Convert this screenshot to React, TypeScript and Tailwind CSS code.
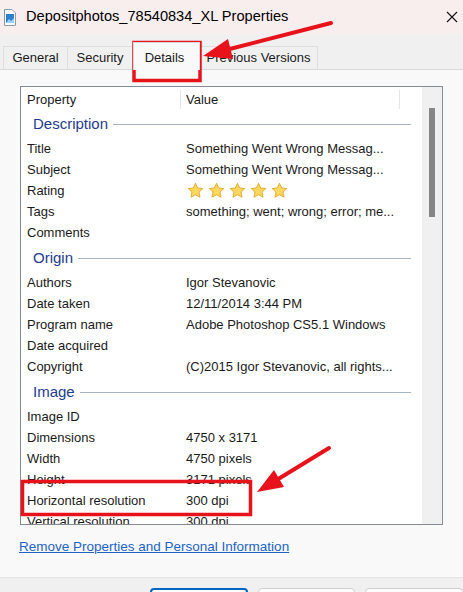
import type { ReactNode } from "react";

type Row = [string, ReactNode];

function Stars() {
  return (
    <div className="flex items-center gap-[4px] pl-[1px]">
      {[0, 1, 2, 3, 4].map((i) => (
        <svg key={i} width="17" height="17" viewBox="0 0 24 24">
          <path
            d="M12 1.8l3.1 6.6 7.2.9-5.3 5 1.4 7.2L12 18l-6.4 3.5 1.4-7.2-5.3-5 7.2-.9z"
            fill="#fbd760"
            stroke="#e3a92b"
            strokeWidth="1.3"
            strokeLinejoin="round"
          />
        </svg>
      ))}
    </div>
  );
}

const groups: { name: string; rows: Row[] }[] = [
  {
    name: "Description",
    rows: [
      ["Title", "Something Went Wrong Messag..."],
      ["Subject", "Something Went Wrong Messag..."],
      ["Rating", <Stars />],
      ["Tags", "something; went; wrong; error; me..."],
      ["Comments", ""],
    ],
  },
  {
    name: "Origin",
    rows: [
      ["Authors", "Igor Stevanovic"],
      ["Date taken", "12/11/2014 3:44 PM"],
      ["Program name", "Adobe Photoshop CS5.1 Windows"],
      ["Date acquired", ""],
      ["Copyright", "(C)2015 Igor Stevanovic, all rights..."],
    ],
  },
  {
    name: "Image",
    rows: [
      ["Image ID", ""],
      ["Dimensions", "4750 x 3171"],
      ["Width", "4750 pixels"],
      ["Height", "3171 pixels"],
      ["Horizontal resolution", "300 dpi"],
      ["Vertical resolution", "300 dpi"],
    ],
  },
];

const tabs = [
  { label: "General", w: "w-[65px]" },
  { label: "Security", w: "w-[65px]" },
  { label: "Details", w: "w-[67px]", active: true },
  { label: "Previous Versions", w: "w-[118px]" },
];

export default function App() {
  return (
    <div
      className="relative h-[592px] w-[463px] overflow-hidden bg-[#f0f0f0] text-[13px] text-[#1a1a1a]"
      style={{ fontFamily: '"Liberation Sans", Arial, sans-serif' }}
    >
      {/* Title bar */}

      <div className="flex h-[34px] items-center bg-[#f9eeee]">
        <svg className="ml-[4px]" width="12" height="17" viewBox="0 0 12 17">
          <path d="M0.5 0.5h7.5l3.5 3.5v12.5h-11z" fill="#fff" stroke="#8a9bb0" />
          <rect x="2" y="5" width="8" height="9" fill="#2f7fd0" />
          <path d="M2 14l3-4 2 2 3-3v5z" fill="#9ad0ff" />
        </svg>
        <span className="ml-[10px] text-[14.6px] text-black">
          Depositphotos_78540834_XL Properties
        </span>
        <svg className="ml-auto mr-[5px]" width="12" height="12" viewBox="0 0 12 12">
          <path d="M1 1l10 10M11 1L1 11" stroke="#111" strokeWidth="1.1" />
        </svg>
      </div>

      {/* Tabs */}

      <div className="mt-[8px] flex h-[27px] items-end pl-[3px]">
        {tabs.map((t) =>
          t.active ? (
            <div
              key={t.label}
              className={`${t.w} relative z-10 -mb-px flex h-[28px] items-start justify-center border border-b-0 border-[#d9d9d9] bg-[#f9f9f9] pr-[4px] pt-[5px]`}
            >
              {t.label}
            </div>
          ) : (
            <div
              key={t.label}
              className={`${t.w} flex h-[23px] items-center justify-center border border-b-0 border-l-0 border-[#dedede] bg-[#f0f0f0] first:border-l`}
            >
              {t.label}
            </div>
          ),
        )}
      </div>

      {/* Details panel */}

      <div className="h-[508px] border-t border-[#d9d9d9] bg-[#f9f9f9] pl-[20px] pt-[16px]">
        <div className="flex h-[439px] w-[423px] overflow-hidden border border-[#868a91] bg-white">
          <div className="flex-1 overflow-hidden">
            <div className="flex h-[22px] pt-[3px]">
              <div className="w-[159px] pl-[6px]">Property</div>
              <div className="w-px bg-[#e5e5e5]" />
              <div className="w-[218px] pl-[5px]">Value</div>
              <div className="w-px bg-[#e5e5e5]" />
            </div>

            {groups.map((g) => (
              <div key={g.name}>
                <div className="flex h-[29px] items-center pl-[12px] pr-[11px] pt-[2px] text-[15px] text-[#1e3c8f]">
                  <span>{g.name}</span>
                  <div className="ml-[5px] h-px flex-1 bg-[#a7b3c6]" />
                </div>
                {g.rows.map(([k, v]) => (
                  <div key={k} className="flex h-[21px] items-center">
                    <div className="w-[165px] shrink-0 pl-[6px]">{k}</div>
                    <div className="whitespace-nowrap">{v}</div>
                  </div>
                ))}
              </div>
            ))}
          </div>

          {/* Scrollbar */}

          <div className="w-[20px] shrink-0 bg-[#f0f0f0] pl-[7px] pt-[21px]">
            <div className="h-[109px] w-[6px] bg-[#868686]" />
          </div>
        </div>

        <div className="mt-[14px] pl-[-1px] text-[13.5px] leading-[16px]">
          <span className="-ml-[1px] text-[#1d64c4] underline decoration-[#1d64c4]">
            Remove Properties and Personal Information
          </span>
        </div>
      </div>

      {/* Buttons */}

      <div className="flex gap-[10px] border-t border-[#e3e3e3] pl-[150px] pt-[10px]">
        <div className="h-[24px] w-[98px] rounded-[4px] border-2 border-[#0067c0] bg-[#fdfdfd]" />
        <div className="h-[24px] w-[97px] rounded-[4px] border border-[#cfcfcf] bg-[#fdfdfd]" />
        <div className="h-[24px] w-[98px] rounded-[4px] border border-[#cfcfcf] bg-[#fdfdfd]" />
      </div>

      {/* Annotations */}

      <svg className="pointer-events-none absolute left-0 top-0" width="463" height="592">
        <rect x="134" y="42.5" width="66" height="38" fill="none" stroke="#e8121b" strokeWidth="3.5" />
        <line x1="331" y1="23" x2="222" y2="51" stroke="#e8121b" strokeWidth="4" strokeLinecap="round" />
        <polygon points="203,56 228,39 233,59" fill="#e8121b" />
        <rect x="22.5" y="481.5" width="228" height="33" fill="none" stroke="#e8121b" strokeWidth="3.5" />
        <line x1="329" y1="448" x2="275" y2="481" stroke="#e8121b" strokeWidth="4" strokeLinecap="round" />
        <polygon points="257,492 274,470 284,487" fill="#e8121b" />
      </svg>
    </div>
  );
}
